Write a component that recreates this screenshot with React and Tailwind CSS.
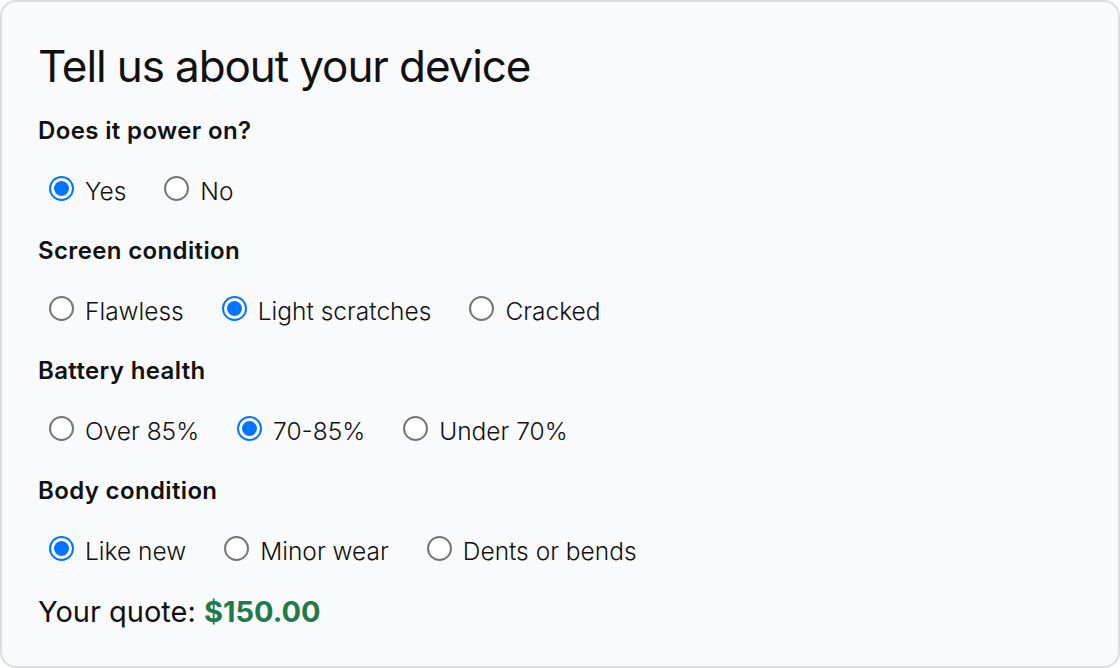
import React, { useState } from 'react';

const groups = [
    { key: 'power', label: 'Does it power on?', options: ['Yes', 'No'] },
    { key: 'screen', label: 'Screen condition', options: ['Flawless', 'Light scratches', 'Cracked'] },
    { key: 'battery', label: 'Battery health', options: ['Over 85%', '70-85%', 'Under 70%'] },
    { key: 'body', label: 'Body condition', options: ['Like new', 'Minor wear', 'Dents or bends'] },
];

const Radio = ({ checked }) => (
    <span
        className={`w-[25px] h-[25px] mb-[6px] rounded-full shrink-0 flex items-center justify-center border-2 ${checked ? 'border-[#0075ff] bg-white' : 'border-[#767676] bg-white'}`}
    >
        {checked && <span className="w-[15px] h-[15px] rounded-full bg-[#0075ff]" />}
    </span>
);

export default function App() {
    const [answers, setAnswers] = useState({
        power: 'Yes',
        screen: 'Light scratches',
        battery: '70-85%',
        body: 'Like new',
    });

    return (
        <div className="w-[1120px] h-[668px] bg-white text-[#111111]" style={{ fontFamily: 'Inter, "Noto Sans", sans-serif' }}>
            <div className="w-full h-full bg-[#f9fafb] border-2 border-[#dcdde1] rounded-[16px] pl-9 pt-[38px]">
                <h1 className="text-[44px] leading-[52px] font-normal tracking-[-0.025em]">Tell us about your device</h1>

                {groups.map((g, i) => (
                    <div key={g.key} className={i === 0 ? 'mt-[24px]' : 'mt-[25px]'}>
                        <p className="text-[24px] leading-[30px] font-semibold tracking-[0.015em]">{g.label}</p>
                        <div className="flex items-center gap-[38px] pl-[11px] h-[40px] mt-[25px]">
                            {g.options.map(o => (
                                <label
                                    key={o}
                                    className="flex items-center gap-[11px] cursor-pointer"
                                    onClick={() => setAnswers(prev => ({ ...prev, [g.key]: o }))}
                                >
                                    <Radio checked={answers[g.key] === o} />
                                    <span className="text-[24.5px] leading-[30px] font-light">{o}</span>
                                </label>
                            ))}
                        </div>
                    </div>
                ))}

                <p className="mt-[23px] text-[29px] leading-[36px]">
                    Your quote: <span className="font-bold text-[#1f7a4c]">$150.00</span>
                </p>
            </div>
        </div>
    );
}
